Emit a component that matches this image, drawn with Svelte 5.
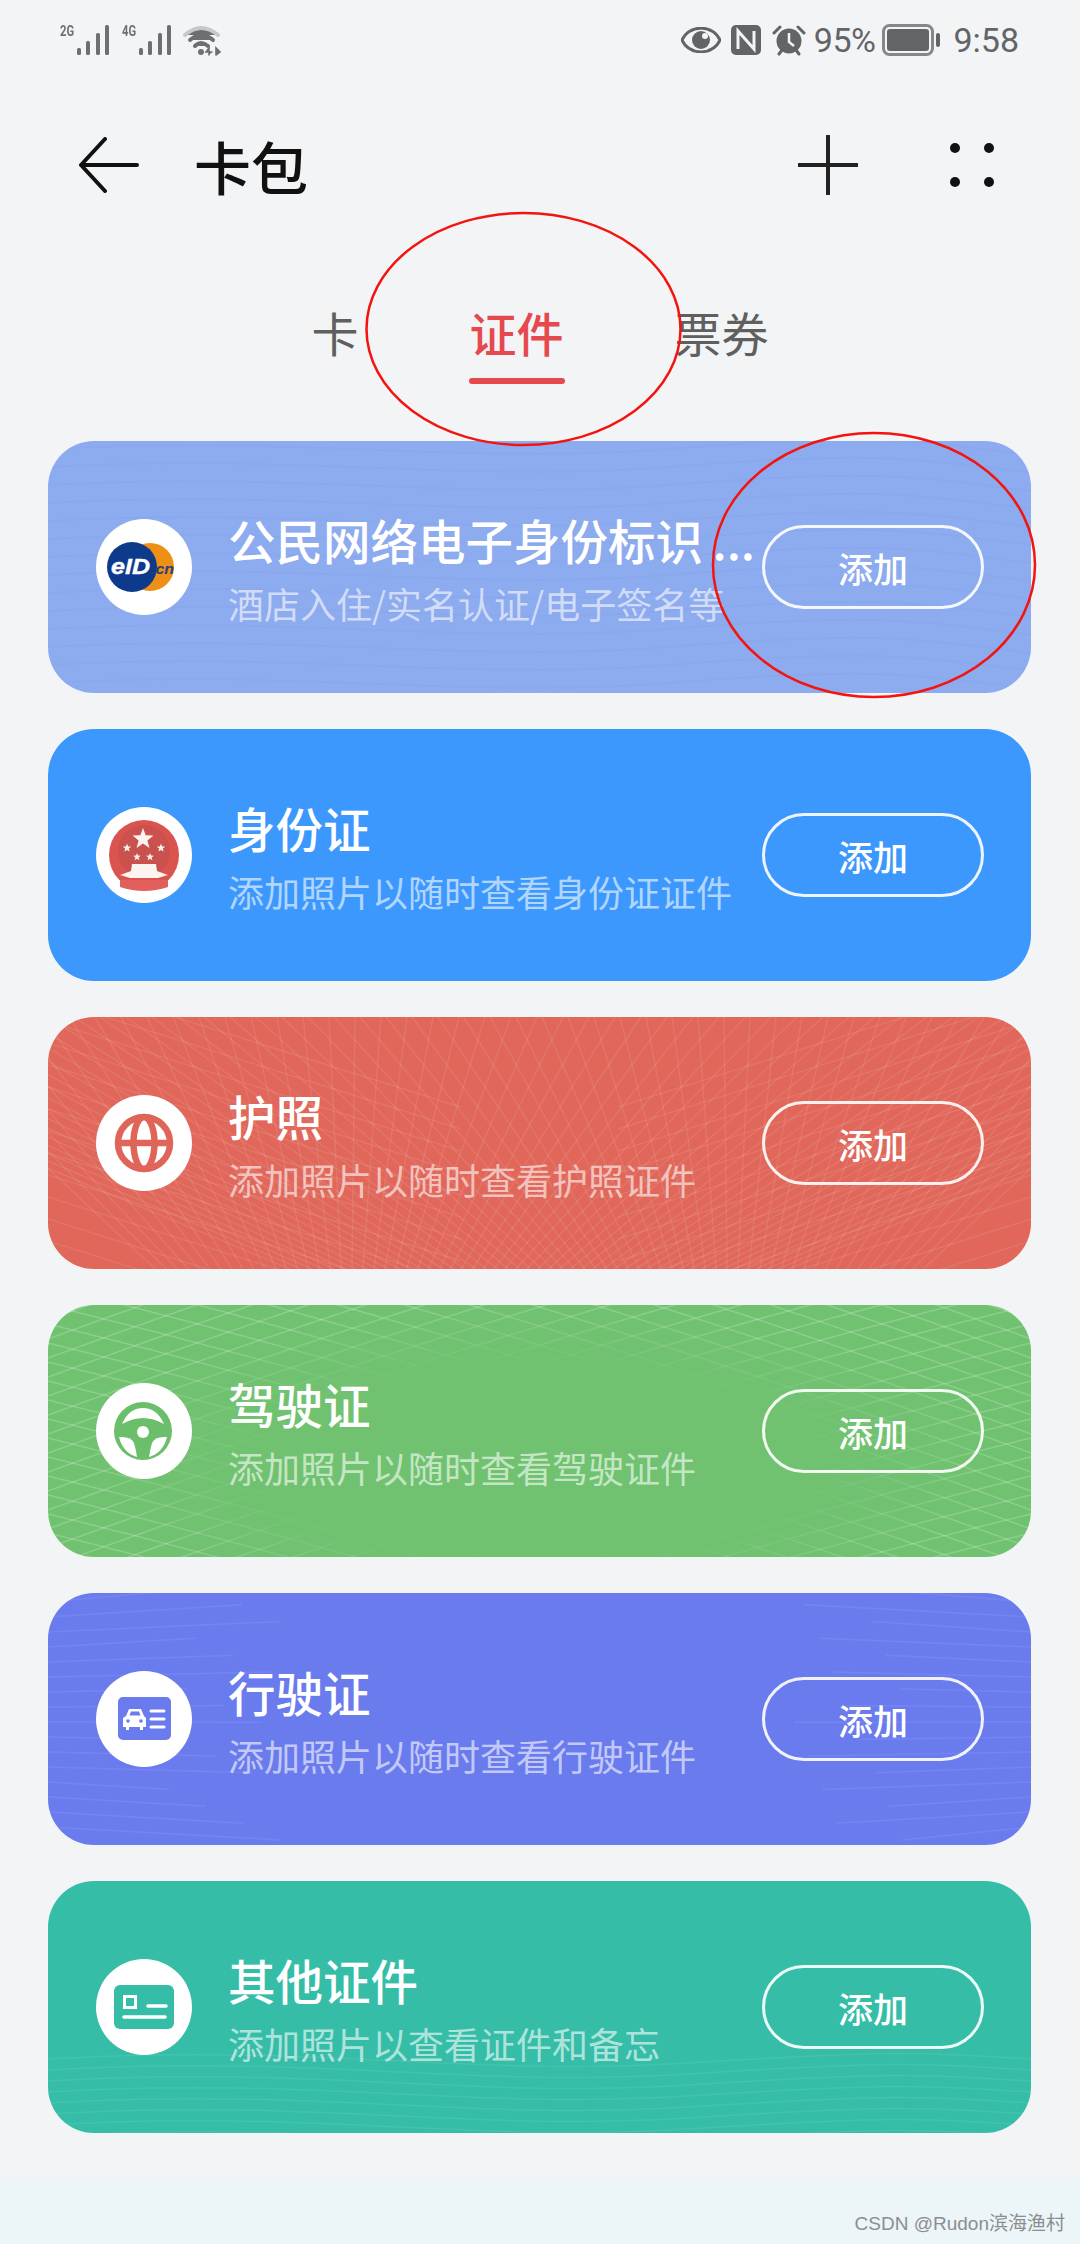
<script>
	const W = 983
	const H = 252

	// five pointed star as a polygon points string
	function star(cx, cy, r) {
		const pts = []
		for (let i = 0; i < 10; i++) {
			const rad = i % 2 ? r * 0.42 : r
			const a = -Math.PI / 2 + (i * Math.PI) / 5
			pts.push(`${(cx + rad * Math.cos(a)).toFixed(1)},${(cy + rad * Math.sin(a)).toFixed(1)}`)
		}
		return pts.join(' ')
	}

	// guilloche backgrounds of the cards, generated rather than typed out
	function ripple() {
		const out = []
		for (let i = 0; i < 14; i++) {
			const y = 8 + i * 18
			out.push(`M0 ${y} C240 ${y - 14} 420 ${y + 16} 620 ${y} S860 ${y - 10} ${W} ${y + 6}`)
		}
		return out
	}

	function fan() {
		const out = []
		for (let i = -14; i <= 44; i++) {
			const top = i * 26
			const bottom = W / 2 + (top - W / 2) * 0.42
			out.push(`M${top} 0 L${bottom + 110} ${H}`)
			out.push(`M${W - top} 0 L${W - bottom - 110} ${H}`)
		}
		for (let i = 0; i < 14; i++) {
			const y = i * 22 - 40
			out.push(`M0 ${y} L${W * 0.42} ${y + 130}`)
			out.push(`M${W} ${y} L${W * 0.58} ${y + 130}`)
		}
		return out
	}

	function net() {
		const out = []
		for (let i = -30; i < 30; i++) {
			const y = i * 19
			out.push(`M0 ${y} Q${W / 2} ${y + 120} ${W} ${y + 300}`)
			out.push(`M0 ${y + 300} Q${W / 2} ${y + 120} ${W} ${y}`)
		}
		return out
	}

	function rays() {
		const out = []
		for (let i = 0; i < 18; i++) {
			const y = i * 15 - 6
			out.push(`M0 ${y} L${120 + ((i * 37) % 120)} ${y + (y - 126) * 0.12}`)
			out.push(`M${W} ${y} L${W - 120 - ((i * 53) % 120)} ${y + (y - 126) * 0.12}`)
		}
		return out
	}

	function waves() {
		const out = []
		for (let i = 0; i < 8; i++) {
			const y = 178 + i * 11
			out.push(`M0 ${y} C260 ${y - 16} 420 ${y + 18} 640 ${y + 4} S880 ${y - 6} ${W} ${y}`)
		}
		return out
	}

	const cards = [
		{ key: 'eid', title: '公民网络电子身份标识\u2009...', sub: '酒店入住/实名认证/电子签名等', color: '#8dabef', tex: ripple(), op: 0.05, dark: true },
		{ key: 'emblem', title: '身份证', sub: '添加照片以随时查看身份证证件', color: '#3d98fd', tex: [], op: 0 },
		{ key: 'globe', title: '护照', sub: '添加照片以随时查看护照证件', color: '#e0675a', tex: fan(), op: 0.09 },
		{ key: 'wheel', title: '驾驶证', sub: '添加照片以随时查看驾驶证件', color: '#70c270', tex: net(), op: 0.2, masked: true },
		{ key: 'car', title: '行驶证', sub: '添加照片以随时查看行驶证件', color: '#6a7bee', tex: rays(), op: 0.08 },
		{ key: 'doc', title: '其他证件', sub: '添加照片以查看证件和备忘', color: '#35bda8', tex: waves(), op: 0.08 }
	]
</script>

<div class="page">
	<div class="status">
		<div class="status-left">
			<span class="net">2G</span>
			<svg width="34" height="32" viewBox="0 0 34 32">
				<rect x="0" y="24" width="4" height="7" rx="1.5" />
				<rect x="9" y="17" width="4" height="14" rx="1.5" />
				<rect x="19" y="9" width="4" height="22" rx="1.5" />
				<rect x="28" y="1" width="4" height="30" rx="1.5" />
			</svg>
			<span class="net second">4G</span>
			<svg width="34" height="32" viewBox="0 0 34 32">
				<rect x="0" y="24" width="4" height="7" rx="1.5" />
				<rect x="9" y="17" width="4" height="14" rx="1.5" />
				<rect x="19" y="9" width="4" height="22" rx="1.5" />
				<rect x="28" y="1" width="4" height="30" rx="1.5" />
			</svg>
			<svg class="wifi" width="40" height="32" viewBox="0 0 40 32" fill="none" stroke-linecap="round">
				<path d="M2 11 Q18 -3 35 11" stroke="#c6c8cb" stroke-width="4" />
				<path d="M7 16 Q18 6 30 16" stroke="#6d6f72" stroke-width="4" />
				<path d="M12 22 Q18 16 25 22" stroke="#6d6f72" stroke-width="4" />
				<circle cx="18" cy="28" r="3" fill="#6d6f72" />
				<path d="M26 31 V24 L23 28 H29 M33 31 V24 L37 28 L33 31" stroke="#6d6f72" stroke-width="1.6" />
			</svg>
		</div>
		<div class="status-right">
			<svg width="40" height="26" viewBox="0 0 40 26">
				<path d="M1 13 Q6 2 20 1 Q34 2 39 13 Q34 24 20 25 Q6 24 1 13 Z" fill="none" stroke="#626468" stroke-width="3" />
				<circle cx="20" cy="13" r="9" fill="#626468" />
				<circle cx="24" cy="9" r="3" fill="#f3f4f6" />
			</svg>
			<svg class="nfc" width="30" height="30" viewBox="0 0 30 30">
				<rect x="0" y="0" width="30" height="30" rx="5" fill="#626468" />
				<path d="M7 24 V6 L23 24 V6" fill="none" stroke="#f3f4f6" stroke-width="3" />
			</svg>
			<svg class="alarm" width="34" height="31" viewBox="0 0 34 31">
				<circle cx="17" cy="16" r="12.500" fill="#626468" />
				<path d="M2 8 L8 2 M32 8 L26 2 M7 29 L10 25 M27 29 L24 25" stroke="#626468" stroke-width="3" stroke-linecap="round" />
				<path d="M17 8 V17 L22 21" fill="none" stroke="#f3f4f6" stroke-width="2.500" />
			</svg>
			<span class="pct">95%</span>
			<svg class="battery" width="58" height="32" viewBox="0 0 58 32">
				<rect x="1.5" y="1.5" width="49" height="29" rx="6" fill="none" stroke="#85878a" stroke-width="3" />
				<rect x="5" y="5" width="42" height="22" rx="3" fill="#626468" />
				<rect x="54" y="9" width="4" height="14" rx="2" fill="#626468" />
			</svg>
			<span class="time">9:58</span>
		</div>
	</div>

	<header class="topbar">
		<svg class="back" width="60" height="56" viewBox="0 0 60 56" fill="none" stroke="#111" stroke-width="4" stroke-linecap="round" stroke-linejoin="round">
			<path d="M26 2 L2 28 L26 54 M2 28 H58" />
		</svg>
		<h1>卡包</h1>
		<svg class="plus" width="60" height="60" viewBox="0 0 60 60" stroke="#222" stroke-width="4" stroke-linecap="round">
			<path d="M30 1 V59 M1 30 H59" />
		</svg>
		<svg class="more" width="44" height="44" viewBox="0 0 44 44" fill="#111">
			<circle cx="5" cy="5" r="5" />
			<circle cx="39" cy="5" r="5" />
			<circle cx="5" cy="39" r="5" />
			<circle cx="39" cy="39" r="5" />
		</svg>
	</header>

	<nav class="tabs">
		<div class="tab">卡</div>
		<div class="tab active">证件<i></i></div>
		<div class="tab">票券</div>
	</nav>

	<main class="list">
		{#each cards as card}
			<section class="card" style:background-color={card.color}>
				{#if card.tex.length}
					<svg class="tex" class:masked={card.masked} viewBox="0 0 983 252" width="983" height="252" fill="none" stroke={card.dark ? '#5f7fd8' : '#fff'} stroke-width="1.5" stroke-opacity={card.op}>
						{#each card.tex as d}
							<path {d} />
						{/each}
					</svg>
				{/if}
				<div class="badge">
					<svg width="96" height="96" viewBox="0 0 96 96">
						{#if card.key === 'eid'}
							<circle cx="54" cy="48" r="24" fill="#ee8f17" />
							<circle cx="36" cy="48" r="25" fill="#0e3a8c" />
							<text x="15" y="55" class="eid" textLength="39" lengthAdjust="spacingAndGlyphs">eID</text>
							<text x="55" y="55" class="cn" textLength="23" lengthAdjust="spacingAndGlyphs">.cn</text>
						{:else if card.key === 'emblem'}
							<circle cx="48" cy="48" r="35" fill="#d9534f" />
							<circle cx="48" cy="44" r="26" fill="#c9514e" />
							<polygon points={star(47, 32, 11)} fill="#fdf3f0" />
							<polygon points={star(31, 41, 4.5)} fill="#fdf3f0" />
							<polygon points={star(65, 41, 4.5)} fill="#fdf3f0" />
							<polygon points={star(41, 50, 4)} fill="#fdf3f0" />
							<polygon points={star(54, 50, 4)} fill="#fdf3f0" />
							<path d="M36 57 H60 L61 64 L72 68 L62 71 H34 L24 68 L35 64 Z" fill="#fdf3f0" />
							<path d="M24 73 H72 V80 Q60 84 48 84 Q36 84 24 80 Z" fill="#e2605c" />
						{:else if card.key === 'globe'}
							<g fill="none" stroke="#df6558" stroke-width="6.500">
								<circle cx="48" cy="48" r="26" />
								<ellipse cx="48" cy="48" rx="10.500" ry="26" />
								<path d="M22 48 H74" />
							</g>
						{:else if card.key === 'wheel'}
							<circle cx="47" cy="48" r="29" fill="#6bbf6b" />
							<path d="M26 41 Q33 25 47 25 Q61 25 68 41 Q47 29 26 41 Z" fill="#fff" />
							<path d="M23 54 Q35 53 38 60 Q40 67 41 74 Q27 70 23 54 Z" fill="#fff" />
							<path d="M71 54 Q59 53 56 60 Q54 67 53 74 Q67 70 71 54 Z" fill="#fff" />
							<circle cx="47" cy="49" r="6" fill="#fff" />
						{:else if card.key === 'car'}
							<rect x="22" y="26" width="53" height="43" rx="5" fill="#6a7bee" />
							<path d="M27 56 V47 L30 45 L33 38 H45 L48 45 L50 47 V56 H47 V59 H44 V56 H33 V59 H30 V56 Z" fill="#fff" />
							<path d="M33.500 44.500 L35 40.500 H43 L44.500 44.500 Z" fill="#6a7bee" />
							<circle cx="32" cy="50" r="1.800" fill="#6a7bee" />
							<circle cx="45" cy="50" r="1.800" fill="#6a7bee" />
							<path d="M55 40 H68 M55 48 H68 M55 56 H68" stroke="#fff" stroke-width="3" stroke-linecap="round" />
						{:else}
							<rect x="18" y="26" width="60" height="44" rx="6" fill="#35bda8" />
							<rect x="28.500" y="37.500" width="11" height="11" fill="none" stroke="#fff" stroke-width="3" />
							<path d="M52 47 H70 M28 58 H69" stroke="#fff" stroke-width="3.500" stroke-linecap="round" />
						{/if}
					</svg>
				</div>
				<div class="texts">
					<h2>{card.title}</h2>
					<p>{card.sub}</p>
				</div>
				<button class="add">添加</button>
			</section>
		{/each}
	</main>

	<svg class="marks" width="1080" height="720" viewBox="0 0 1080 720" fill="none" stroke="#f4140f" stroke-width="2.5">
		<ellipse cx="523.500" cy="329" rx="157" ry="116" />
		<ellipse cx="874" cy="565" rx="161" ry="132" />
	</svg>

	<div class="watermark">CSDN @Rudon滨海渔村</div>
</div>

<style>
	:global(body) {
		background: #f3f4f6;
	}

	.page {
		position: relative;
		width: 1080px;
		height: 2244px;
		overflow: hidden;
		background: linear-gradient(#f3f4f6 0, #f3f4f6 2170px, #ecf5f7 2185px);
		font-family: 'Noto Sans CJK SC', 'Noto Sans', sans-serif;
	}

	.status {
		height: 80px;
		box-sizing: border-box;
		padding: 0 61px 0 60px;
		display: flex;
		justify-content: space-between;
		align-items: center;
		color: #626468;
	}

	.status-left,
	.status-right {
		display: flex;
		align-items: center;
	}

	.status-left svg {
		fill: #6d6f72;
		align-self: flex-end;
	}

	.status-left {
		height: 32px;
	}

	.net {
		font: 700 14px/14px 'Roboto', sans-serif;
		transform: scaleX(0.8);
		transform-origin: left top;
		width: 17px;
		align-self: flex-start;
		color: #6d6f72;
	}

	.second {
		margin-left: 11px;
	}

	.wifi {
		margin-left: 10px;
	}

	.nfc {
		margin-left: 10px;
	}

	.alarm {
		margin-left: 11px;
	}

	.pct {
		margin-left: 8px;
		font: 400 34px/40px 'Roboto', sans-serif;
		letter-spacing: -0.5px;
	}

	.battery {
		margin-left: 7px;
	}

	.time {
		margin-left: 13px;
		font: 400 34px/40px 'Roboto', sans-serif;
	}

	.topbar {
		margin-top: 35px;
		height: 100px;
		padding: 0 86px 0 79px;
		display: flex;
		align-items: center;
	}

	.topbar h1 {
		margin: 0 0 0 55px;
		font-size: 57px;
		line-height: 70px;
		font-weight: 500;
		color: #111;
		flex: 1;
	}

	.more {
		margin-left: 92px;
	}

	.tabs {
		margin-top: 87px;
		display: flex;
		justify-content: center;
		gap: 110px;
		height: 82px;
		font-size: 47px;
		line-height: 60px;
		color: #5f5f5f;
	}

	.tab {
		display: flex;
		flex-direction: column;
		align-items: center;
	}

	.tab.active {
		color: #e5484d;
		font-weight: 500;
	}

	.tab i {
		width: 96px;
		height: 6px;
		margin-top: 16px;
		border-radius: 3px;
		background: #e5484d;
	}

	.list {
		margin: 57px 49px 0 48px;
		display: flex;
		flex-direction: column;
		gap: 36px;
	}

	.card {
		position: relative;
		overflow: hidden;
		height: 252px;
		box-sizing: border-box;
		padding: 0 47px 0 48px;
		border-radius: 46px;
		display: flex;
		align-items: center;
	}

	.tex {
		position: absolute;
		left: 0;
		top: 0;
	}

	.tex.masked {
		-webkit-mask-image: radial-gradient(ellipse 46% 62% at 50% 62%, transparent 60%, #000 100%);
		mask-image: radial-gradient(ellipse 46% 62% at 50% 62%, transparent 60%, #000 100%);
	}

	.badge {
		position: relative;
		flex: none;
		width: 96px;
		height: 96px;
		border-radius: 50%;
		background: #fff;
	}

	.badge svg {
		display: block;
	}

	.eid {
		font: italic 700 22px 'Liberation Sans', sans-serif;
		fill: #fff;
		stroke: #fff;
		stroke-width: 0.4;
	}

	.cn {
		font: italic 700 14px 'Liberation Sans', sans-serif;
		fill: #24407e;
	}

	.texts {
		position: relative;
		flex: 1;
		min-width: 0;
		margin-left: 36px;
		padding-top: 9px;
	}

	.texts h2 {
		margin: 0;
		font-size: 47.5px;
		line-height: 50px;
		font-weight: 500;
		color: #fff;
		white-space: nowrap;
	}

	.texts p {
		margin: 13px 0 0;
		font-size: 36px;
		line-height: 50px;
		color: rgba(255, 255, 255, 0.6);
		white-space: nowrap;
	}

	.add {
		position: relative;
		flex: none;
		width: 222px;
		height: 84px;
		padding: 0;
		border: 3px solid rgba(255, 255, 255, 0.9);
		border-radius: 42px;
		background: transparent;
		color: #fff;
		font-family: inherit;
		font-size: 35px;
		font-weight: 500;
	}

	.marks {
		position: absolute;
		left: 0;
		top: 0;
		pointer-events: none;
	}

	.watermark {
		position: absolute;
		right: 15px;
		bottom: 9px;
		font-family: 'Liberation Sans', 'Noto Sans CJK SC', sans-serif;
		font-size: 19px;
		line-height: 22px;
		color: #8b8e90;
	}
</style>
